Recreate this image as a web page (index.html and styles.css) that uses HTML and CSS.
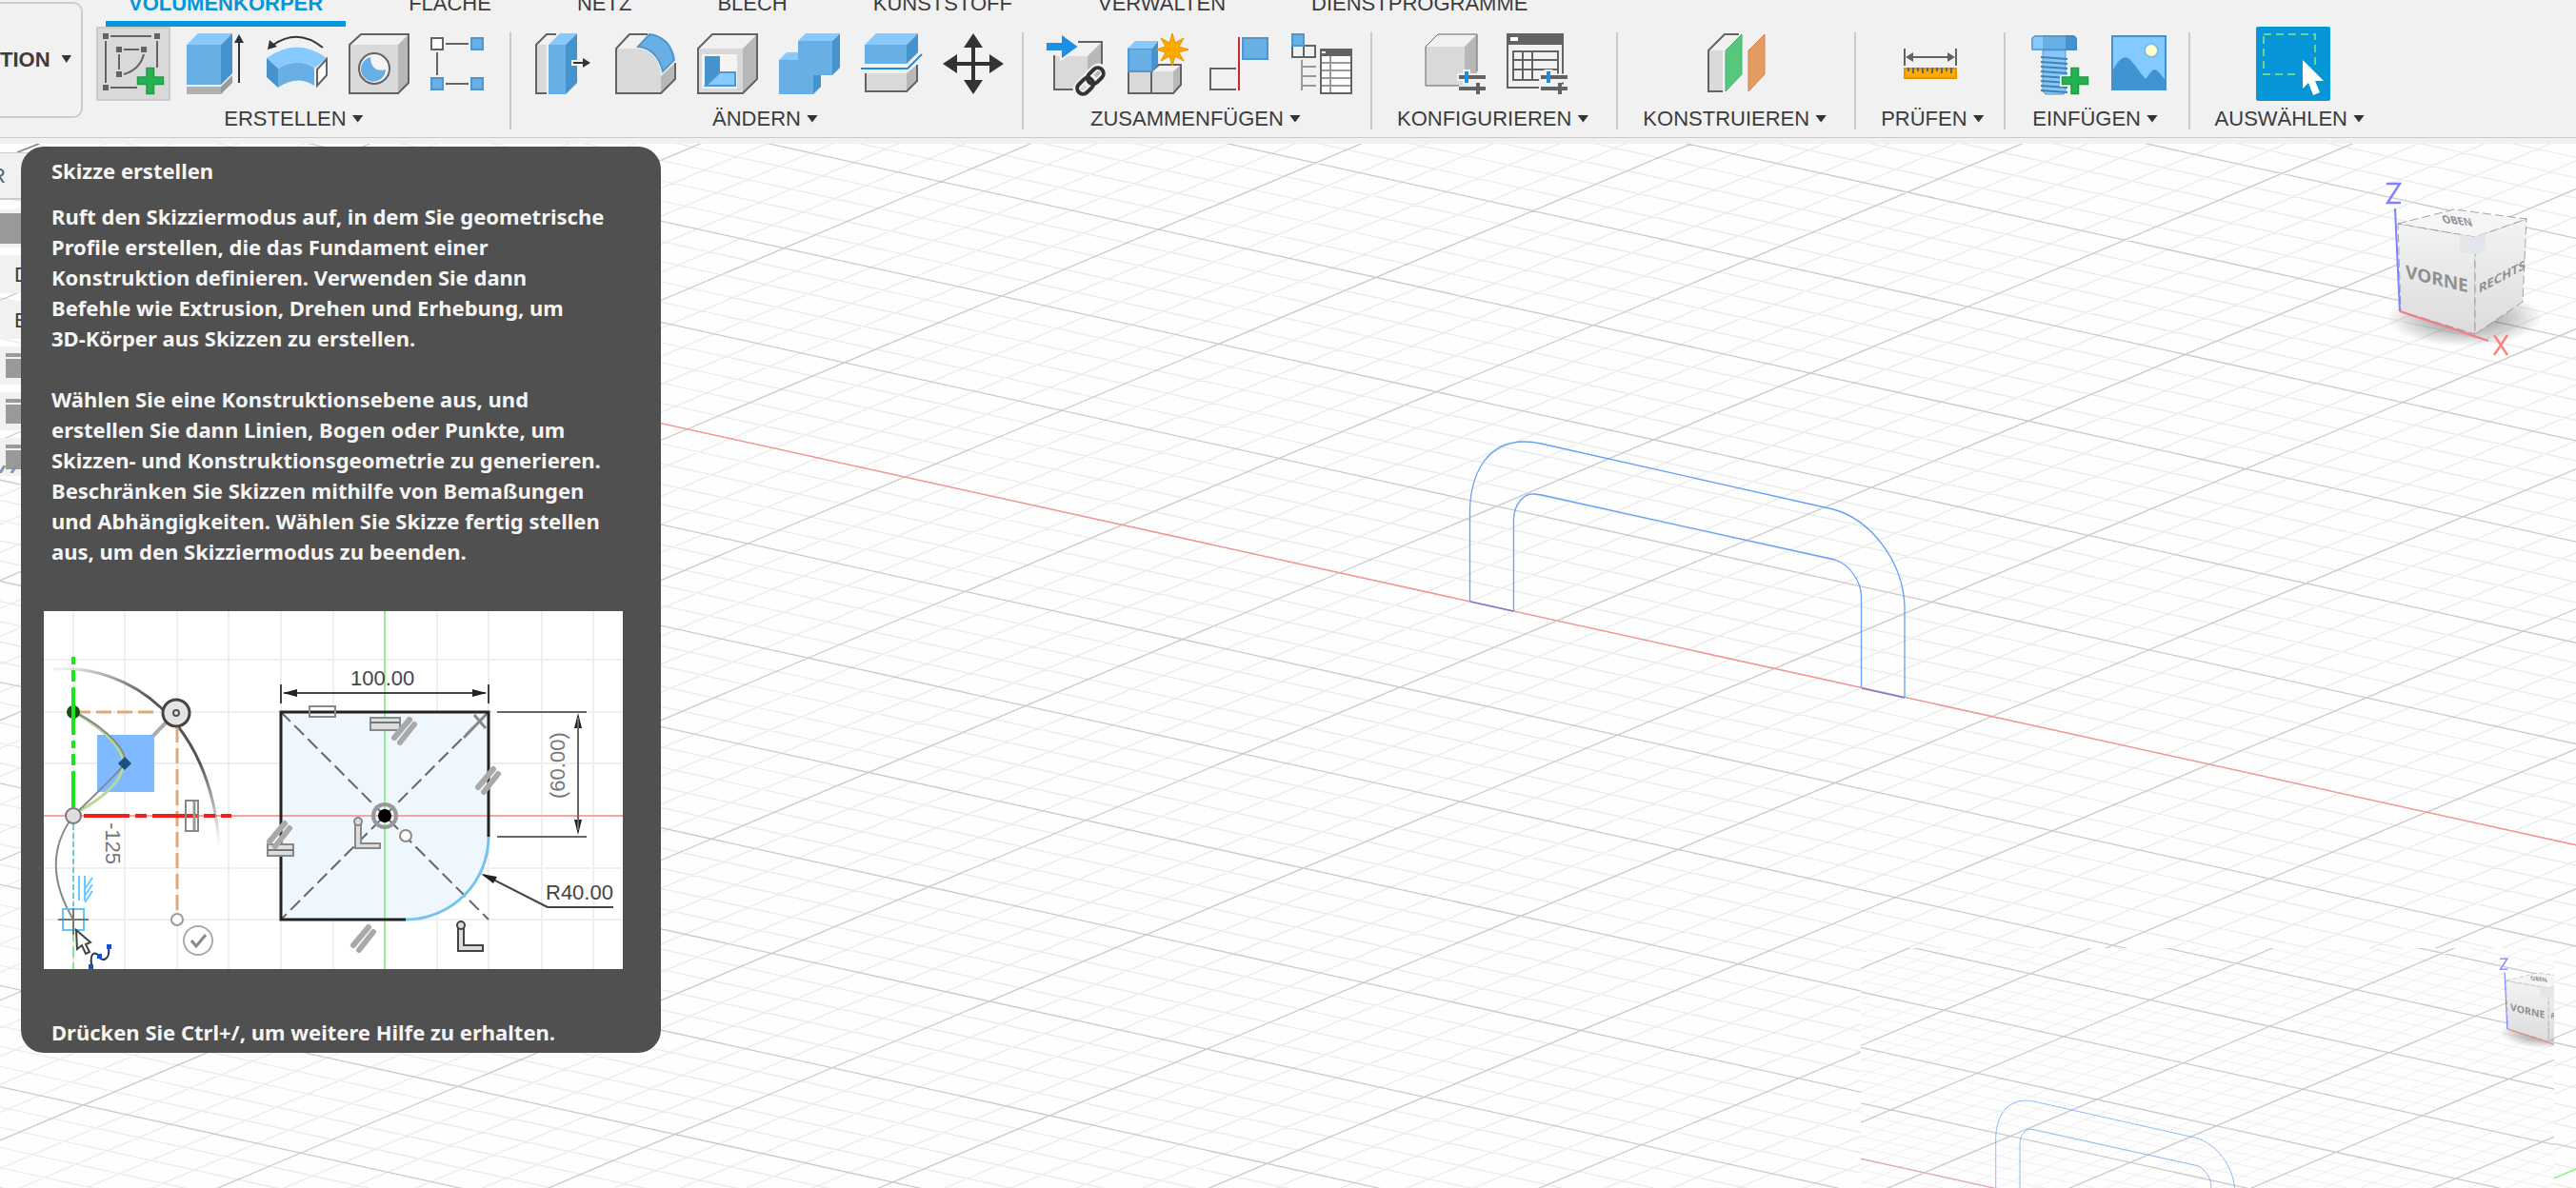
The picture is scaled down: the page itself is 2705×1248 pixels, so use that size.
FILE: index.html
```html
<!DOCTYPE html>
<html lang="de">
<head>
<meta charset="utf-8">
<title>Volumenkörper</title>
<meta name="viewport" content="width=device-width, initial-scale=1">
<link rel="stylesheet" href="styles.css">
</head>
<body>
<header class="ribbon">
  <button class="workspace" type="button"><span>TION</span><span class="caret"></span></button>
  <div class="ribbon-main">
    <nav class="tabs" role="tablist">
      <button class="tab tab-active" role="tab" aria-selected="true">VOLUMENKÖRPER</button>
      <button class="tab" role="tab">FLÄCHE</button>
      <button class="tab" role="tab">NETZ</button>
      <button class="tab" role="tab">BLECH</button>
      <button class="tab" role="tab">KUNSTSTOFF</button>
      <button class="tab" role="tab">VERWALTEN</button>
      <button class="tab" role="tab">DIENSTPROGRAMME</button>
    </nav>
    <div class="groups">
      <section class="group">
        <div class="tools">
          <button class="tool tool-hover" aria-label="Skizze erstellen"><svg viewBox="0 0 64 64">
            <g class="dark"><path d="M0 0h6v6H0zM54 0h6v6h-6zM0 54h6v6H0zM14 14h6v6h-6zM40 14h6v6h-6zM14 40h6v6h-6z"/></g>
            <path class="line" d="M8 3H51M3 8V52M57 8V36M8 57H36M22 17H38M17 22V38M43 22Q39 38 22 43"/>
            <path d="M46 36.500h7.500V46H63.500v7.500H53.500V63.500H46V53.500H36.500V46H46z" fill="#24b352" stroke="#1f9c45" stroke-width="1.500"/></svg></button>
          <button class="tool" aria-label="Extrusion"><svg viewBox="0 0 64 64">
            <path class="b2" d="M2 12H38V54H2z"/><path class="b1" d="M2 12L14 0H50L38 12z"/><path class="b3" d="M38 12L50 0V42L38 54z"/>
            <path fill="#b1b1b1" d="M2 56H38V64H2z"/><path fill="#999" d="M38 56L50 44V52L38 64z"/>
            <path d="M57 52V8" stroke="#333" stroke-width="2"/><path fill="#333" d="M57 1L62 10H52z"/></svg></button>
          <button class="tool" aria-label="Drehen"><svg viewBox="0 0 64 64">
            <path d="M59 15Q33-6 7 12" fill="none" stroke="#333" stroke-width="2"/><path fill="#333" d="M1 17L3 7L11 14z"/>
            <path class="b1" d="M0 26Q32 3 63 26L51 36Q32 25 12 37z"/><path class="b3" d="M0 26L12 37V57L0 46z"/><path class="b2" d="M12 37Q32 25 50 36V55Q32 43 12 57z"/>
            <path d="M53 38L63 27V44L53 55z" fill="#fff" stroke="#636363" stroke-width="2"/></svg></button>
          <button class="tool" aria-label="Bohrung"><svg viewBox="0 0 64 64">
            <path class="g2" d="M1 12H52V63H1z"/><path class="g1" d="M1 12L13 1H63L52 12z"/><path class="g3" d="M52 12L63 1V52L52 63z"/><path class="line" d="M1 12L13 1H63V52L52 63H1z"/>
            <circle cx="27" cy="37" r="16" fill="#f4f4f4" stroke="#636363" stroke-width="2"/><path class="b2" d="M23 25C23 36 30 41 39 38A13 13 0 1 1 23 25z"/></svg></button>
          <button class="tool" aria-label="Muster"><svg viewBox="0 0 64 64">
            <path d="M1 5H13V17H1z" fill="#fff" stroke="#636363" stroke-width="2"/><path class="line" d="M16 11H40M16 53H40M7 20V44"/>
            <path class="b2 o" d="M43 5H55V17H43zM43 47H55V59H43zM1 47H13V59H1z"/></svg></button>
        </div>
        <button class="menu">ERSTELLEN<span class="caret"></span></button>
      </section>
      <span class="sep"></span>
      <section class="group">
        <div class="tools">
          <button class="tool" aria-label="Drücken/Ziehen"><svg viewBox="0 0 64 64">
            <path class="g2" d="M3 12H14V63H3z"/><path class="g1" d="M3 12L14 1H25L14 12z"/><path class="line" d="M14 63H3V12L14 1H24"/>
            <path class="b2" d="M16 12H34V64H16z"/><path class="b1" d="M16 12L28 0H46L34 12z"/><path class="b3" d="M34 12L46 0V52L34 64z"/>
            <path d="M40 31H53" stroke="#f4f4f4" stroke-width="6"/><path d="M42 31H54" stroke="#333" stroke-width="2"/><path fill="#333" d="M52 26L60 31L52 36z"/></svg></button>
          <button class="tool" aria-label="Abrunden"><svg viewBox="0 0 64 64">
            <path class="g1" d="M1 16L15 1H35L22 16z"/><path class="g2" d="M1 16H22Q46 18 48 45V63H1z"/><path class="g3" d="M48 45L63 31V48L48 63z"/><path class="line" d="M34 1H15L1 16V63H48L63 48V31"/>
            <path class="b2 o" d="M24 14L36 1Q58 4 62 28L50 40Q44 16 24 14z"/></svg></button>
          <button class="tool" aria-label="Schale"><svg viewBox="0 0 64 64">
            <path class="g2" d="M1 16H48V63H1z"/><path class="g1" d="M1 16L16 1H63L48 16z"/><path class="g3" d="M48 16L63 1V48L48 63z"/><path class="line" d="M1 16L16 1H63V48L48 63H1z"/>
            <path fill="#f4f4f4" d="M5 22H42V58H5z"/><path class="b3" d="M8 24H24V40L8 56z"/><path class="b1 o" d="M24 41H40V55H9z"/></svg></button>
          <button class="tool" aria-label="Kombinieren"><svg viewBox="0 0 64 64">
            <path class="b3" d="M56 8L64 0V36L56 44zM36 44H44V56L36 64z"/><path class="b1" d="M20 8L28 0H64L56 8zM0 28L8 20H20V28z"/><path class="b2" d="M20 8H56V44H36V64H0V28H20z"/></svg></button>
          <button class="tool" aria-label="Körper teilen"><svg viewBox="0 0 64 64">
            <path class="b2" d="M4 12H48V32H4z"/><path class="b1" d="M4 12L16 0H60L48 12z"/><path class="b3" d="M48 12L60 0V20L48 32z"/>
            <path class="g2" d="M5 42H48V61H5z"/><path class="g3" d="M48 42L59 33V50L48 61z"/><path class="line" d="M5 42V61H48L59 50V33"/>
            <path d="M0 37H49L64 22" fill="none" stroke="#1a8fe3" stroke-width="2"/></svg></button>
          <button class="tool" aria-label="Verschieben"><svg viewBox="0 0 64 64"><path d="M32 10V54M10 32H54" stroke="#333" stroke-width="4"/><path fill="#333" d="M32 0L42 15H22zM32 64L42 49H22zM0 32L15 22V42zM64 32L49 22V42z"/></svg></button>
        </div>
        <button class="menu">ÄNDERN<span class="caret"></span></button>
      </section>
      <span class="sep"></span>
      <section class="group">
        <div class="tools">
          <button class="tool" aria-label="Komponente einfügen"><svg viewBox="0 0 64 64">
            <path class="g2" d="M9 24H44V60H9z"/><path class="g1" d="M9 24L24 9H59L44 24z"/><path class="g3" d="M44 24L59 9V45L44 60z"/><path class="line" d="M59 40V9H34M9 23V59H34"/>
            <path d="M0 9H16V0L35 14L16 28V19H0z" fill="#1a8fe3" stroke="#f1f1f1" stroke-width="2"/>
            <g fill="none" transform="rotate(-45 47 50)"><g stroke="#f1f1f1" stroke-width="8"><rect x="29" y="44" width="21" height="12" rx="6"/><rect x="44" y="44" width="21" height="12" rx="6"/></g><g stroke="#333" stroke-width="4"><rect x="30" y="44" width="19" height="12" rx="6"/><rect x="45" y="44" width="19" height="12" rx="6"/></g></g></svg></button>
          <button class="tool" aria-label="Neue Komponente"><svg viewBox="0 0 64 64">
            <path class="g2" d="M1 40H48V63H1z"/><path class="g1" d="M25 40L33 33H56L48 40z"/><path class="g3" d="M48 40L56 33V54L48 63z"/><path class="line" d="M1 40V63H48L56 54V33H33L25 40V63"/>
            <path class="b2 o" d="M1 16H26V40H1z"/><path class="b1" d="M0 16L8 8H32L26 16z"/><path class="b3" d="M26 16L32 8V33L26 40z"/>
            <path d="M47 0L50 10L59 5L54 14L64 17L54 20L59 29L50 24L47 34L44 24L35 29L40 20L30 17L40 14L35 5L44 10z" fill="#ffaa00" stroke="#e69100"/></svg></button>
          <button class="tool" aria-label="Verbindung"><svg viewBox="0 0 64 64"><path class="line" d="M28 37H1V59H28"/><path d="M31 4V60" stroke="#c92a2f" stroke-width="2"/><path class="b2 o" d="M35 5H61V27H35z"/></svg></button>
          <button class="tool" aria-label="Stückliste"><svg viewBox="0 0 64 64">
            <path class="line" d="M1 13H25V25H1zM13 13V25"/><path class="b2 o" d="M1 1H13V13H1z"/><path d="M11 28V60M11 35H26M11 45H26M11 55H26" stroke="#999" stroke-width="2"/>
            <path fill="#fff" d="M30 16H64V64H30z"/><path d="M31 31H63M31 39H63M31 47H63M31 55H63M41 24V63" stroke="#999" stroke-width="2"/><path class="line" d="M31 17H63V63H31z"/><path class="dark" d="M30 16H64V24H30z"/><path fill="#fff" d="M32 19H36V21H32z"/></svg></button>
        </div>
        <button class="menu">ZUSAMMENFÜGEN<span class="caret"></span></button>
      </section>
      <span class="sep"></span>
      <section class="group">
        <div class="tools">
          <button class="tool" aria-label="Konfiguration"><svg viewBox="0 0 64 64">
            <path class="g2" d="M1 14H42V55H1z"/><path class="g1" d="M1 14L14 1H55L42 14z"/><path class="g3" d="M42 14L55 1V43L42 55z"/><path d="M36 55H1V14L14 1H55V40" fill="none" stroke="#636363"/>
            <path d="M34 46H64M44 38V54" stroke="#f1f1f1" stroke-width="8"/><path d="M36 46H64M36 58H64M56 52V64" stroke="#636363" stroke-width="4"/><path d="M44 40V52" stroke="#1a8fe3" stroke-width="4"/></svg></button>
          <button class="tool" aria-label="Konfigurationstabelle"><svg viewBox="0 0 64 64">
            <path class="line" d="M1 1H59V57H1zM7 19H54V49H7zM7 28H54M7 38H54M17 19V49M27 19V49"/><path class="dark" d="M0 0H60V12H0z"/><path fill="#fff" d="M4 4H12V8H4z"/>
            <path d="M34 47H64M34 58H64M44 38V54" stroke="#f1f1f1" stroke-width="9"/><path d="M36 46H64M36 58H64M56 52V64" stroke="#636363" stroke-width="4"/><path d="M44 40V52" stroke="#1a8fe3" stroke-width="4"/></svg></button>
        </div>
        <button class="menu">KONFIGURIEREN<span class="caret"></span></button>
      </section>
      <span class="sep"></span>
      <section class="group">
        <div class="tools">
          <button class="tool" aria-label="Versatzebene"><svg viewBox="0 0 64 64">
            <path class="g2" d="M1 18H16V62H1z"/><path class="g1" d="M1 18L18 1H34L18 18z"/><path class="line" d="M16 61H1V18L18 1H33"/><path d="M19 18L36 1V43L19 61z" fill="#58c77e" stroke="#48b16d"/><path d="M43 18L60 1V43L43 61z" fill="#e59a63" stroke="#d18348"/></svg></button>
        </div>
        <button class="menu">KONSTRUIEREN<span class="caret"></span></button>
      </section>
      <span class="sep"></span>
      <section class="group">
        <div class="tools">
          <button class="tool" aria-label="Messen"><svg viewBox="0 0 64 64">
            <path class="line" d="M4 16V34M58 16V34M10 25H52"/><path class="dark" d="M5 25L13 20V30zM57 25L49 20V30z"/><path d="M4 37H58V47H4z" fill="#ffaa00" stroke="#e69100" stroke-width="2"/><path d="M8 36V40M13 36V42M18 36V40M23 36V42M28 36V40M33 36V42M38 36V40M43 36V42M48 36V40M53 36V42" stroke="#636363" stroke-width="2"/></svg></button>
        </div>
        <button class="menu menu-tight">PRÜFEN<span class="caret"></span></button>
      </section>
      <span class="sep"></span>
      <section class="group">
        <div class="tools">
          <button class="tool" aria-label="Verbindungselement einfügen"><svg viewBox="0 0 64 64">
            <path fill="#87c6f7" d="M16 18H40V62L38 64H19L16 61z" stroke="#5c9ccb"/><path d="M14 25L42 27M14 30L42 32M14 35L42 37M14 40L42 42M14 45L42 47M14 50L42 52M14 55L42 57M14 60L42 62" stroke="#3d83b5" stroke-width="2"/>
            <path class="b1" d="M4 5L7 2H16V18H4z"/><path class="b2" d="M16 2H40V18H16z"/><path class="b3" d="M40 2H49L52 5V18H40z"/><path d="M5 17V5L8 3H48L51 5V17z" fill="none" stroke="#3d83b5"/>
            <path d="M45 34h10v10h10v12H55v10H45V56H34V44h11z" fill="#f1f1f1"/><path d="M46 36.500h7.500V46H63.500v7.500H53.500V63.500H46V53.500H36.500V46H46z" fill="#24b352" stroke="#1f9c45" stroke-width="1.500"/></svg></button>
          <button class="tool" aria-label="Bild einfügen"><svg viewBox="0 0 64 64">
            <path fill="#82caff" d="M2 2H60V60H2z"/><path fill="#4093ce" d="M2 42C10 26 16 22 22 28C28 34 32 42 38 48C42 44 44 38 48 38C53 40 55 46 60 50V60H2z"/><circle cx="44" cy="18" r="7" fill="#ffffcc" stroke="#7dbbe8" stroke-width="2"/><path d="M3 3H59V59H3z" fill="none" stroke="#4093ce" stroke-width="2"/></svg></button>
        </div>
        <button class="menu">EINFÜGEN<span class="caret"></span></button>
      </section>
      <span class="sep"></span>
      <section class="group">
        <div class="tools">
          <button class="tool tool-on" aria-label="Auswählen"><svg viewBox="0 0 64 64">
            <path d="M1 1H55V43H1z" fill="none" stroke="#67d78d" stroke-width="2" stroke-dasharray="8 5"/><path fill="#0696d7" d="M38 38H60V50H38z"/><path fill="#fff" d="M42 28L64 50H55L60 62L53 65L48 52L42 58z"/></svg></button>
        </div>
        <button class="menu">AUSWÄHLEN<span class="caret"></span></button>
      </section>
    </div>
  </div>
</header>

<main class="stage">
  <svg class="canvas" viewBox="0 151 2705 1097" preserveAspectRatio="xMinYMin slice" aria-hidden="true">
    <defs>
      <clipPath id="inset"><rect x="1954" y="996" width="728" height="300" rx="16"/></clipPath>
      <linearGradient id="face" x2="0" y2="1"><stop offset="0" stop-color="#f3f3f3"/><stop offset="1" stop-color="#dcdcdc"/></linearGradient>
      <radialGradient id="shade"><stop offset="0" stop-color="#000" stop-opacity=".45"/><stop offset=".6" stop-color="#000" stop-opacity=".2"/><stop offset="1" stop-color="#000" stop-opacity="0"/></radialGradient>
    </defs>
    <rect x="0" y="151" width="2705" height="1097" fill="#fefefe"/>
    <g id="scene" fill="none">
      <path id="minor" stroke="#ececec" stroke-width="1.400"/>
      <path class="hair" id="major" stroke="#cacaca" stroke-width="1.300"/>
      <path class="hair" id="axis-y" stroke="#7fff7f" stroke-width="1.400"/>
      <path id="axis-x" stroke="#ff9090" stroke-width="1.300"/>
      <g stroke="#649ff8" stroke-width="1.300">
        <path d="M1543.500 632V533C1545 500 1560 463 1602 464Q1608 464 1618 466L1925 535C1965 546 1998 590 2000 636V733"/>
        <path d="M1589.500 642V545C1590 530 1600 518 1611 519L1619 520L1927 588C1944 594 1954 612 1954.500 626V722"/>
      </g>
      <path d="M1544 632L1589 642M1955 723L2000 733" stroke="#7b7bd0" stroke-width="1.400"/>
      <ellipse cx="2588" cy="334" rx="82" ry="30" fill="url(#shade)"/>
      <g stroke="#8e8e8e" stroke-width=".8" stroke-dasharray="9 4">
        <path fill="url(#face)" d="M2518 235L2599 249V351L2521 327z"/>
        <path fill="url(#face)" d="M2599 249L2653 230L2649 317L2599 351z"/>
        <path fill="#f5f5f5" d="M2518 235L2577 220L2653 230L2599 249z"/>
      </g>
      <path fill="#e2e5e9" d="M2583 246L2599 249V267L2583 265zM2599 249L2610 245V263L2599 267z"/>
      <g class="cube-text">
        <text transform="translate(2526 292) skewY(13)" font-size="19">VORNE</text>
        <text transform="translate(2603 308) skewY(-28)" font-size="13">RECHTS</text>
        <text transform="translate(2566 234) skewY(7) skewX(20)" font-size="11">OBEN</text>
      </g>
      <path d="M2515 219L2520 327" stroke="#7f7fff" stroke-width="2"/>
      <path d="M2520 327L2613 358" stroke="#f08080" stroke-width="2"/>
      <path d="M2506 193H2520L2507 213H2521" stroke="#7f7fff" stroke-width="2.400"/>
      <path d="M2619 352L2633 373M2633 352L2619 373" stroke="#ff7f7f" stroke-width="2.400"/>
    </g>
    <path d="M18 160L41 151" stroke="#888" stroke-width="1.500"/>
    <g clip-path="url(#inset)">
      <rect x="1954" y="996" width="728" height="252" fill="#fefefe"/>
      <use href="#scene" transform="translate(1246.800 901) scale(.55)"/>
    </g>
  </svg>

  <aside class="browser">
    <div class="browser-head">R</div>
    <ul class="browser-rows">
      <li class="selected"></li>
      <li class="named">D</li>
      <li class="named">E</li>
      <li><i class="folder"></i></li>
      <li><i class="folder"></i></li>
      <li><i class="folder"></i><svg class="hatch" viewBox="0 0 22 8"><path d="M0 8L5 0M12 8L17 0" stroke="#7f95b5" stroke-width="3"/></svg></li>
    </ul>
  </aside>

  <section class="tip" role="tooltip">
    <h2>Skizze erstellen</h2>
    <p>Ruft den Skizziermodus auf, in dem Sie geometrische<br>Profile erstellen, die das Fundament einer<br>Konstruktion definieren. Verwenden Sie dann<br>Befehle wie Extrusion, Drehen und Erhebung, um<br>3D-Körper aus Skizzen zu erstellen.</p>
    <p>Wählen Sie eine Konstruktionsebene aus, und<br>erstellen Sie dann Linien, Bogen oder Punkte, um<br>Skizzen- und Konstruktionsgeometrie zu generieren.<br>Beschränken Sie Skizzen mithilfe von Bemaßungen<br>und Abhängigkeiten. Wählen Sie Skizze fertig stellen<br>aus, um den Skizziermodus zu beenden.</p>
    <svg class="figure" viewBox="0 0 608 376" role="img" aria-label="Skizze">
      <defs><linearGradient id="fade" gradientUnits="userSpaceOnUse" x1="20" y1="61" x2="184" y2="240"><stop offset="0" stop-color="#555" stop-opacity=".1"/><stop offset=".35" stop-color="#555"/><stop offset=".7" stop-color="#555"/><stop offset="1" stop-color="#555" stop-opacity=".05"/></linearGradient>
        <g id="par" stroke="#a9a9a9" stroke-width="6" stroke-linecap="round"><path d="M-10 8L6-11M-4 13L11-6"/></g></defs>
      <rect width="608" height="376" fill="#fff"/>
      <path d="M31 0V376M85 0V376M140 0V376M194 0V376M249 0V376M304 0V376M413 0V376M467 0V376M523 0V376M577 0V376M0 51H608M0 106H608M0 160H608M0 270H608M0 324H608" stroke="#efefef" stroke-width="2"/>
      <path d="M249 106H467V237A87 87 0 0 1 380 324H249z" fill="#eff7fe"/>
      <path d="M358 0V376" stroke="#98ec98" stroke-width="2"/><path d="M0 215H608" stroke="#f3a5a5" stroke-width="2"/>
      <path d="M249 106L467 324M467 106L249 324" stroke="#666" stroke-width="2" stroke-dasharray="14 6"/>
      <path d="M467 237V106H249V324H380" fill="none" stroke="#222" stroke-width="3"/><path d="M467 237A87 87 0 0 1 380 324" fill="none" stroke="#74c4ee" stroke-width="3"/>
      <path d="M249 77V97M467 77V97M252 86H464M529 311L462 277M529 311H598" stroke="#444" stroke-width="2" fill="none"/>
      <path d="M251 86L266 82V90zM465 86L450 82V90zM459 276L476 279L472 286zM561 107L557 123H565zM561 235L557 219H565z" fill="#222"/>
      <path d="M476 106H570M476 237H570M561 112V230" stroke="#666" stroke-width="2"/>
      <circle cx="358" cy="215" r="12" fill="none" stroke="#999" stroke-width="4"/><circle cx="358" cy="215" r="7"/>
      <g fill="#ddd" stroke="#888" stroke-width="2"><rect x="279" y="100" width="27" height="11" fill="none"/><rect x="343" y="112" width="31" height="13"/><rect x="235" y="245" width="27" height="12"/><path d="M327 222h6v22h20v5h-26z"/><path d="M435 330h6v21h20v6h-26z" stroke="#444"/><circle cx="380" cy="236" r="6" fill="#fff"/><circle cx="330" cy="221" r="4"/><circle cx="438" cy="330" r="4" stroke="#444"/></g>
      <path d="M343 117H374M235 251H262" stroke="#777" stroke-width="2"/>
      <use href="#par" x="378" y="125"/><use href="#par" x="466" y="177"/><use href="#par" x="247" y="234"/><use href="#par" x="335" y="343"/>
      <path d="M452 109L464 123M464 109L441 133" stroke="#888" stroke-width="3"/>
      <g class="dim"><text x="322" y="78">100.00</text><text x="527" y="303">R40.00</text><text class="soft" transform="translate(547 197) rotate(-90)">(60.00)</text><text class="soft" transform="translate(65 222) rotate(90)">-125</text></g>
      <path d="M10 61C90 55 175 115 184 245" fill="none" stroke="url(#fade)" stroke-width="3"/>
      <path d="M33 106H120M140 122V318" stroke="#e0a878" stroke-width="3" stroke-dasharray="16 6"/>
      <path d="M133 112L112 134" stroke="#aaa" stroke-width="4"/>
      <path d="M56 130H116V190H56z" fill="#7fb9ff"/>
      <path d="M32 106C100 146 100 175 34 212" fill="none" stroke="#b5d99a" stroke-width="3"/><path d="M33 106C70 126 88 148 85 160Q80 168 32 214Q-6 262 31 324" fill="none" stroke="#888" stroke-width="2"/>
      <path d="M85 153L92 160L85 167L78 160z" fill="#1c4f80"/><circle cx="31" cy="106" r="7" fill="#174c17"/>
      <path d="M31 48V206" stroke="#1ae61a" stroke-width="4" stroke-dasharray="8 6 12 6 50 6"/><path d="M31 224V310" stroke="#6bc9dc" stroke-width="2" stroke-dasharray="6 3"/><path d="M31 335V376" stroke="#8be68b" stroke-width="2" stroke-dasharray="12 5"/>
      <path d="M42 215H197" stroke="#f02020" stroke-width="4" stroke-dasharray="48 6 12 6"/>
      <rect x="149" y="199" width="13" height="32" fill="none" stroke="#888" stroke-width="2"/><path d="M158 200V230" stroke="#999" stroke-width="3"/>
      <circle cx="31" cy="215" r="8" fill="#ddd" stroke="#777" stroke-width="2"/><circle cx="139" cy="107" r="14" fill="#e4e4e4" stroke="#444" stroke-width="3"/><circle cx="139" cy="107" r="3" fill="none" stroke="#555" stroke-width="2"/>
      <circle cx="140" cy="324" r="6" fill="#fff" stroke="#999" stroke-width="2"/><circle cx="162" cy="346" r="15" fill="#fff" stroke="#aaa" stroke-width="2"/><path d="M155 346L160 352L170 340" fill="none" stroke="#888" stroke-width="3"/>
      <path d="M37 278V304M43 278V304M43 292L51 280M43 299L51 287M43 306L51 294" stroke="#69c8ff" stroke-width="2"/>
      <path d="M20 313H42V335H20z" fill="none" stroke="#5ec6fa" stroke-width="2"/><path d="M15 324H47M31 312V340" stroke="#777" stroke-width="2"/>
      <path d="M34 335L49 348L44 350L48 358L44 360L40 351L35 355z" fill="#fff" stroke="#444" stroke-width="2"/>
      <path d="M50 372C48 356 56 358 58 363S70 368 68 353" fill="none" stroke="#2a3556" stroke-width="2"/><path d="M47 371h5v5h-5zM56 360h5v5h-5zM66 350h5v5h-5z" fill="#1b4fd0"/>
    </svg>
    <p class="tip-foot">Drücken Sie Ctrl+/, um weitere Hilfe zu erhalten.</p>
  </section>
</main>
<script src="grid.js"></script>
</body>
</html>
```
FILE: styles.css
```css
* { box-sizing: border-box; }
body { margin: 0; min-height: 100vh; display: flex; flex-direction: column; overflow: hidden; font-family: "Liberation Sans", Arial, sans-serif; font-size: 22px; line-height: 25px; color: #3c3c3c; background: #fefefe; }
button { font: inherit; color: inherit; background: none; border: 0; padding: 0; margin: 0; }
.ribbon { display: flex; height: 151px; background: #f1f1f1; position: relative; white-space: nowrap; }
.ribbon::after { content: ""; position: absolute; left: 0; right: 0; top: 144px; height: 1px; background: #cacaca; }
.workspace { flex: none; display: flex; align-items: center; justify-content: flex-end; gap: 12px; width: 87px; height: 122px; margin: 2px 14px 0 0; padding: 0 10px 2px 0; border: 2px solid #ccc; border-left: 0; border-radius: 0 10px 10px 0; font-weight: bold; }
.caret { display: inline-block; width: 12px; height: 8px; background: #333; clip-path: polygon(0 0, 100% 0, 50% 100%); }
.ribbon-main { flex: 1; min-width: 0; }
.tabs { display: flex; gap: 42px; margin: -9px 0 0 10px; height: 37px; }
.tab { padding: 0 24px 6px; border-bottom: 6px solid transparent; }
.tab-active { color: #0696d7; font-weight: bold; border-bottom-color: #0696d7; }
.groups { display: flex; }
.group { display: flex; flex-direction: column; align-items: center; }
.tools { display: flex; gap: 8px; }
.tool { width: 78px; height: 78px; display: flex; align-items: center; justify-content: center; border-radius: 2px; }
.tool svg { width: 64px; height: 64px; display: block; overflow: visible; }
.tool-hover { background: #d9d9d9; border: 2px solid #cacaca; }
.tool-on { background: #0696d7; }
.menu { display: flex; align-items: center; gap: 6px; padding: 0 17px 0 10px; margin-top: 6px; }
.menu-tight { padding-right: 8px; }
.sep { flex: none; width: 2px; height: 102px; margin: 6px 16px 0 12px; background: #cacaca; }
.dark { fill: #636363; }
.line { fill: none; stroke: #636363; stroke-width: 2; }
.b1 { fill: #87caff; } .b2 { fill: #68afe6; } .b3 { fill: #4692cd; }
.o { stroke: #4e97cf; stroke-width: 2; }
.g1 { fill: #f1f1f1; } .g2 { fill: #d9d9d9; } .g3 { fill: #b8b8b8; }

.stage { position: relative; flex: 1; min-height: 1097px; overflow: hidden; }
.canvas { position: absolute; inset: 0; width: 100%; height: 100%; }
.hair { vector-effect: non-scaling-stroke; }
.cube-text text { fill: #8d9196; font-family: "Noto Sans", sans-serif; font-weight: bold; }
.browser { position: absolute; left: 0; top: 9px; width: 40px; }
.browser-head { height: 50px; padding-top: 4px; background: #f1f1f1; border-top: 1px solid #ccc; border-bottom: 2px solid #ccc; color: #566573; text-indent: -10px; line-height: 40px; }
.browser-rows { list-style: none; margin: 10px 0 0; padding: 0; display: grid; gap: 8px; }
.browser-rows li { height: 40px; background: #f1f1f1; display: flex; align-items: center; position: relative; }
.browser-rows .selected { background: #999; border: solid #f1f1f1; border-width: 4px 0; }
.browser-rows .named { padding-left: 15px; }
.folder { width: 20px; height: 26px; margin: 0 0 0 6px; background: linear-gradient(#999 4px, #f1f1f1 4px, #f1f1f1 6px, #999 6px); }
.hatch { position: absolute; left: 0; bottom: 3px; width: 22px; height: 8px; }

.tip { position: absolute; left: 22px; top: 3px; width: 672px; padding: 9px 32px 6px; border-radius: 24px; background: #505050; color: #f5f5f5; font-family: "Noto Sans", "Open Sans", sans-serif; font-size: 22px; font-weight: bold; line-height: 32px; white-space: nowrap; }
.tip h2 { margin: 0 0 16px; font: inherit; }
.tip p { margin: 0 0 32px; }
.figure { display: block; width: 608px; height: 376px; margin: 47px 0 50px -8px; }
.tip .tip-foot { margin: 0; }
.dim text { font-size: 22px; fill: #444; }
.dim { font-family: "Liberation Sans", Arial, sans-serif; font-weight: normal; }
.dim .soft { fill: #777; }
```
FILE: grid.js
```js
// Ground plane: two families of parallel lines, every fifth one is major.
const origin = [1279.9, 361.3];
const stepX = [228.3, 50.3];
const stepY = [164.9, -69.9];

function line(along, across, n) {
  const x = origin[0] + across[0] * n;
  const y = origin[1] + across[1] * n;
  const reach = 20;
  return `M${x - along[0] * reach} ${y - along[1] * reach}L${x + along[0] * reach} ${y + along[1] * reach}`;
}

let minor = "";
let major = "";
for (let i = -100; i <= 100; i++) {
  const pair = line(stepX, stepY, i / 5) + line(stepY, stepX, i / 5);
  if (i % 5 === 0) major += pair;
  else minor += pair;
}
document.getElementById("minor").setAttribute("d", minor);
document.getElementById("major").setAttribute("d", major);
document.getElementById("axis-x").setAttribute("d", line(stepX, stepY, -2));
document.getElementById("axis-y").setAttribute("d", line(stepY, stepX, 10));
```
